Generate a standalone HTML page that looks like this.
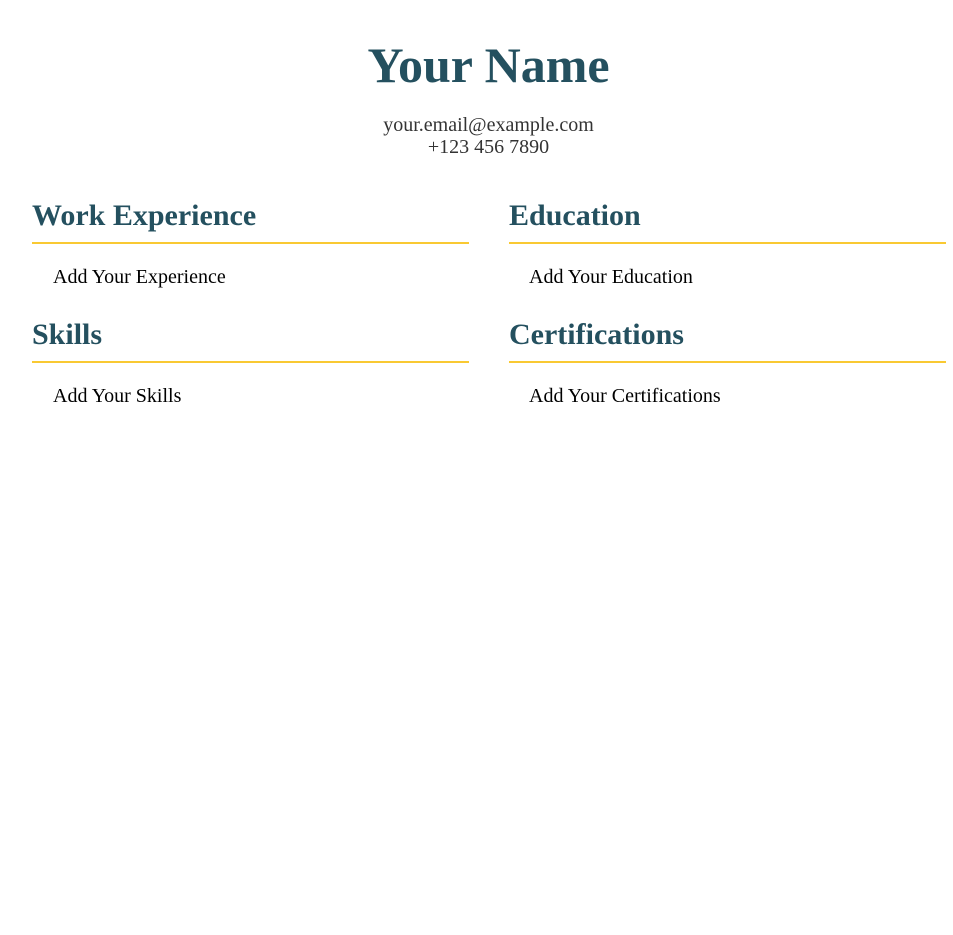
<!DOCTYPE html>
<html><head><style>
body{margin:0;background:#fff;font-family:"Liberation Serif",serif;width:953px;height:935px;position:relative}
.a{position:absolute;white-space:nowrap}
h1{position:absolute;margin:0;left:0;width:977px;text-align:center;top:35px;font-size:50px;line-height:60px;color:#24505f;font-weight:bold}
.c{left:0;width:977px;text-align:center;color:#333;font-size:20px;line-height:22px}
h2{position:absolute;margin:0;font-size:30px;line-height:34px;color:#24505f;font-weight:bold}
.l{position:absolute;height:2px;background:#f9c932;width:437px}
.t{font-size:20px;line-height:22px;color:#000}
</style></head><body>
<h1>Your Name</h1>
<div class="a c" style="top:114px">your.email@example.com</div>
<div class="a c" style="top:136px">+123 456 7890</div>
<h2 style="left:32px;top:199px">Work Experience</h2>
<div class="l" style="left:32px;top:242px"></div>
<div class="a t" style="left:53px;top:266px">Add Your Experience</div>
<h2 style="left:509px;top:199px">Education</h2>
<div class="l" style="left:509px;top:242px"></div>
<div class="a t" style="left:529px;top:266px">Add Your Education</div>
<h2 style="left:32px;top:318px">Skills</h2>
<div class="l" style="left:32px;top:361px"></div>
<div class="a t" style="left:53px;top:385px">Add Your Skills</div>
<h2 style="left:509px;top:318px">Certifications</h2>
<div class="l" style="left:509px;top:361px"></div>
<div class="a t" style="left:529px;top:385px">Add Your Certifications</div>
</body></html>
